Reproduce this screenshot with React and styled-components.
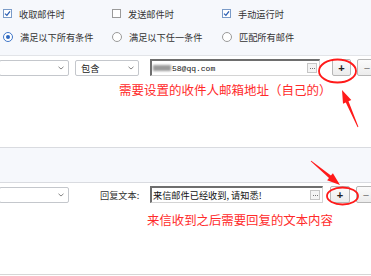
import React from 'react';
import styled, { createGlobalStyle } from 'styled-components';

const GlobalStyle = createGlobalStyle`
  html, body {
    margin: 0;
    padding: 0;
    background: #ffffff;
  }
  body {
    font-family: "Noto Sans CJK SC", "Noto Sans", sans-serif;
    color: #333;
  }
`;

const Page = styled.div`
  position: relative;
  width: 371px;
  height: 276px;
  overflow: hidden;
  background: #fff;
`;

const Frame = styled.div`
  height: 274px;
  border-bottom: 1px solid #d6d6d6;
`;

const OptionsPanel = styled.div`
  height: 56px;
  padding-top: 2px;
  box-sizing: border-box;
  background: #f6f8fc;
  border-bottom: 1px solid #e2e4e8;
`;

const OptionRow = styled.div`
  display: grid;
  grid-template-columns: 109px 110px 1fr;
  height: 23px;
  align-items: center;
  padding-left: 3px;
`;

const Option = styled.label`
  display: flex;
  align-items: center;
  gap: 7px;
  font-size: 9.2px;
  color: #333;
  white-space: nowrap;
`;

const Box = styled.span`
  width: 9px;
  height: 9px;
  box-sizing: border-box;
  border: 1px solid ${(p) => (p.checked ? '#7a9bc8' : '#9a9a9a')};
  background: #fff;
  display: flex;
  align-items: center;
  justify-content: center;
`;

const Radio = styled.span`
  width: 10px;
  height: 10px;
  box-sizing: border-box;
  border-radius: 50%;
  border: 1px solid ${(p) => (p.checked ? '#3f76c8' : '#9a9a9a')};
  background: #fff;
  display: flex;
  align-items: center;
  justify-content: center;
  &::after {
    content: '';
    width: 4px;
    height: 4px;
    border-radius: 50%;
    background: ${(p) => (p.checked ? '#2f68c0' : 'transparent')};
  }
`;

const Section = styled.div`
  height: ${(p) => p.h}px;
  box-sizing: border-box;
  padding-top: ${(p) => p.pt || 0}px;
  background: ${(p) => p.bg || '#fff'};
  border-bottom: ${(p) => (p.line ? '1px solid #d9dbe0' : 'none')};
`;

const FieldRow = styled.div`
  display: flex;
  align-items: center;
  height: ${(p) => p.h || 17}px;
`;

const Select = styled.div`
  width: ${(p) => p.w}px;
  height: 16px;
  margin-left: ${(p) => p.ml || 0}px;
  box-sizing: border-box;
  border: 1px solid #c4c7cc;
  border-radius: 2px;
  background: #fff;
  display: flex;
  align-items: center;
  justify-content: space-between;
  padding: 0 4px 0 5px;
  font-size: 9.2px;
  color: #222;
  flex-shrink: 0;
`;

const Label = styled.span`
  margin-left: ${(p) => p.ml}px;
  width: ${(p) => p.w}px;
  font-size: 9.2px;
  color: #333;
  white-space: nowrap;
  flex-shrink: 0;
`;

const Input = styled.div`
  width: ${(p) => p.w}px;
  height: 17px;
  margin-left: ${(p) => p.ml || 0}px;
  box-sizing: border-box;
  border-top: 2px solid #6e6e6e;
  border-left: 2px solid #6e6e6e;
  border-right: 1px solid #d4d4d4;
  border-bottom: 1px solid #d4d4d4;
  background: #fff;
  display: flex;
  align-items: center;
  padding: 0 2px 0 1px;
  flex-shrink: 0;
`;

const InputText = styled.span`
  flex: 1;
  font-size: ${(p) => (p.mono ? 8 : 9.2)}px;
  font-family: ${(p) =>
    p.mono ? '"Liberation Mono", monospace' : '"Noto Sans CJK SC", sans-serif'};
  color: #111;
  white-space: nowrap;
  display: flex;
  align-items: center;
`;

const Blur = styled.span`
  display: inline-block;
  width: 18px;
  height: 6px;
  background: #9a9a9a;
  filter: blur(1.2px);
  margin-right: 1px;
`;

const Dots = styled.span`
  width: 10px;
  height: 10px;
  box-sizing: border-box;
  border: 1px solid #c6c6c6;
  background: #f4f4f4;
  display: flex;
  align-items: center;
  justify-content: center;
  gap: 1px;
  &::before,
  &::after,
  & > i {
    content: '';
    width: 1px;
    height: 1px;
    background: #777;
  }
`;

const Btn = styled.div`
  width: ${(p) => p.w || 19}px;
  height: 17px;
  margin-left: ${(p) => p.ml || 0}px;
  box-sizing: border-box;
  border: 1px solid #b7b7b7;
  border-radius: 2px;
  background: linear-gradient(#fbfbfb, #ececec);
  display: flex;
  align-items: center;
  justify-content: center;
  font-family: "Liberation Sans", sans-serif;
  font-size: 11px;
  font-weight: ${(p) => (p.minus ? 'normal' : 'bold')};
  color: ${(p) => (p.minus ? '#777' : '#222')};
  flex-shrink: 0;
`;

const Note = styled.div`
  margin-left: ${(p) => p.ml}px;
  margin-top: ${(p) => p.mt}px;
  font-size: ${(p) => p.fs}px;
  line-height: 14px;
  color: #ff2b2b;
  white-space: nowrap;
`;

const Overlay = styled.svg`
  position: absolute;
  left: 0;
  top: 0;
  pointer-events: none;
`;

const Chevron = () => (
  <svg width="6" height="4" viewBox="0 0 6 4">
    <path d="M0.5 0.8 L3 3 L5.5 0.8" fill="none" stroke="#777" strokeWidth="0.9" />
  </svg>
);

const Check = () => (
  <svg width="7" height="7" viewBox="0 0 7 7">
    <path d="M1 3.6 L2.9 5.4 L6 1.4" fill="none" stroke="#2b5fb4" strokeWidth="1.3" />
  </svg>
);

function arrowPoints(tail, tip, headLen, headW, shaftW) {
  const dx = tip[0] - tail[0];
  const dy = tip[1] - tail[1];
  const len = Math.hypot(dx, dy);
  const ux = dx / len;
  const uy = dy / len;
  const nx = -uy;
  const ny = ux;
  const bx = tip[0] - ux * headLen;
  const by = tip[1] - uy * headLen;
  const pts = [
    [tail[0] + nx * 0.4, tail[1] + ny * 0.4],
    [bx + (nx * shaftW) / 2, by + (ny * shaftW) / 2],
    [bx + (nx * headW) / 2, by + (ny * headW) / 2],
    tip,
    [bx - (nx * headW) / 2, by - (ny * headW) / 2],
    [bx - (nx * shaftW) / 2, by - (ny * shaftW) / 2],
    [tail[0] - nx * 0.4, tail[1] - ny * 0.4],
  ];
  return pts.map((p) => `${p[0].toFixed(1)},${p[1].toFixed(1)}`).join(' ');
}

export default function App() {
  return (
    <Page>
      <GlobalStyle />
      <Frame>
        <OptionsPanel>
          <OptionRow>
            <Option>
              <Box checked>
                <Check />
              </Box>
              收取邮件时
            </Option>
            <Option>
              <Box />
              发送邮件时
            </Option>
            <Option>
              <Box checked>
                <Check />
              </Box>
              手动运行时
            </Option>
          </OptionRow>
          <OptionRow>
            <Option>
              <Radio checked />
              满足以下所有条件
            </Option>
            <Option>
              <Radio />
              满足以下任一条件
            </Option>
            <Option>
              <Radio />
              匹配所有邮件
            </Option>
          </OptionRow>
        </OptionsPanel>

        <Section h={92} pt={3} line>
          <FieldRow>
            <Select w={70} ml={-1}>
              <span />
              <Chevron />
            </Select>
            <Select w={64} ml={6}>
              <span>包含</span>
              <Chevron />
            </Select>
            <Input w={170} ml={11}>
              <InputText mono>
                <Blur />
                58@qq.com
              </InputText>
              <Dots>
                <i />
              </Dots>
            </Input>
            <Btn ml={12}>+</Btn>
            <Btn ml={6} w={20} minus>−</Btn>
          </FieldRow>
          <Note ml={119} mt={7} fs={12.5}>需要设置的收件人邮箱地址（自己的）</Note>
        </Section>

        <Section h={35} bg="#f6f8fc" line />

        <Section h={91} pt={3}>
          <FieldRow>
            <Select w={70} ml={-1}>
              <span />
              <Chevron />
            </Select>
            <Label ml={31} w={50}>回复文本:</Label>
            <Input w={173}>
              <InputText>来信邮件已经收到, 请知悉!</InputText>
              <Dots>
                <i />
              </Dots>
            </Input>
            <Btn ml={7} w={20}>+</Btn>
            <Btn ml={6} w={20} minus>−</Btn>
          </FieldRow>
          <Note ml={147} mt={10} fs={12.4}>来信收到之后需要回复的文本内容</Note>
        </Section>
      </Frame>

      <Overlay width="371" height="276" viewBox="0 0 371 276">
        <ellipse cx="337.5" cy="71" rx="18.5" ry="11.5" fill="none" stroke="#ff1a1a" strokeWidth="1.8" />
        <ellipse cx="342.5" cy="196" rx="15.5" ry="8.5" fill="none" stroke="#ff1a1a" strokeWidth="1.8" />
        <polygon points={arrowPoints([358, 127], [342, 90], 13, 9, 3)} fill="#ff1a1a" />
        <polygon points={arrowPoints([311, 161], [340, 185], 13, 9, 3)} fill="#ff1a1a" />
      </Overlay>
    </Page>
  );
}
